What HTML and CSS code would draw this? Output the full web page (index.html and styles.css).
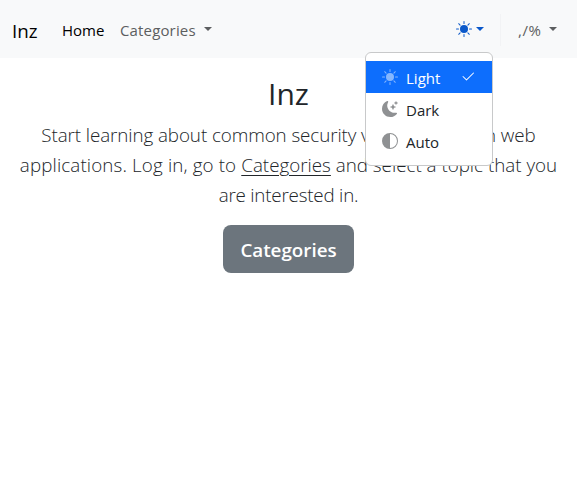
FILE: index.html
```html
<!DOCTYPE html>
<html lang="en">
<head>
<meta charset="utf-8">
<title>Inz</title>
<link rel="stylesheet" href="styles.css">
</head>
<body>
<svg class="sprite">
  <symbol id="sun" viewBox="0 0 16 16"><path d="M8 12a4 4 0 1 0 0-8 4 4 0 0 0 0 8z"/><path d="M8 0a.5.5 0 0 1 .5.5v2a.5.5 0 0 1-1 0v-2A.5.5 0 0 1 8 0zm0 13a.5.5 0 0 1 .5.5v2a.5.5 0 0 1-1 0v-2A.5.5 0 0 1 8 13zm8-5a.5.5 0 0 1-.5.5h-2a.5.5 0 0 1 0-1h2a.5.5 0 0 1 .5.5zM3 8a.5.5 0 0 1-.5.5h-2a.5.5 0 0 1 0-1h2A.5.5 0 0 1 3 8zm10.657-5.657a.5.5 0 0 1 0 .707l-1.414 1.415a.5.5 0 1 1-.707-.708l1.414-1.414a.5.5 0 0 1 .707 0zm-9.193 9.193a.5.5 0 0 1 0 .707L3.05 13.657a.5.5 0 0 1-.707-.707l1.414-1.414a.5.5 0 0 1 .707 0zm9.193 2.121a.5.5 0 0 1-.707 0l-1.414-1.414a.5.5 0 0 1 .707-.707l1.414 1.414a.5.5 0 0 1 0 .707zM4.464 4.465a.5.5 0 0 1-.707 0L2.343 3.05a.5.5 0 1 1 .707-.707l1.414 1.414a.5.5 0 0 1 0 .708z"/></symbol>
  <symbol id="moon" viewBox="0 0 16 16"><path d="M6 .278a.768.768 0 0 1 .08.858 7.208 7.208 0 0 0-.878 3.46c0 4.021 3.278 7.277 7.318 7.277.527 0 1.04-.055 1.533-.16a.787.787 0 0 1 .81.316.733.733 0 0 1-.031.893A8.349 8.349 0 0 1 8.344 16C3.734 16 0 12.286 0 7.71 0 4.266 2.114 1.312 5.124.06A.752.752 0 0 1 6 .278z"/><path d="M10.794 3.148a.217.217 0 0 1 .412 0l.387 1.162c.173.518.579.924 1.097 1.097l1.162.387a.217.217 0 0 1 0 .412l-1.162.387a1.734 1.734 0 0 0-1.097 1.097l-.387 1.162a.217.217 0 0 1-.412 0l-.387-1.162A1.734 1.734 0 0 0 9.31 6.593l-1.162-.387a.217.217 0 0 1 0-.412l1.162-.387a1.734 1.734 0 0 0 1.097-1.097l.387-1.162zM13.863.099a.145.145 0 0 1 .274 0l.258.774c.115.346.386.617.732.732l.774.258a.145.145 0 0 1 0 .274l-.774.258a1.156 1.156 0 0 0-.732.732l-.258.774a.145.145 0 0 1-.274 0l-.258-.774a1.156 1.156 0 0 0-.732-.732l-.774-.258a.145.145 0 0 1 0-.274l.774-.258c.346-.115.617-.386.732-.732L13.863.1z"/></symbol>
  <symbol id="half" viewBox="0 0 16 16"><path d="M8 15A7 7 0 1 0 8 1v14zm0 1A8 8 0 1 1 8 0a8 8 0 0 1 0 16z"/></symbol>
  <symbol id="check" viewBox="0 0 16 16"><path d="M13.854 3.646a.5.5 0 0 1 0 .708l-7 7a.5.5 0 0 1-.708 0l-3.5-3.5a.5.5 0 1 1 .708-.708L6.5 10.293l6.646-6.647a.5.5 0 0 1 .708 0z"/></symbol>
</svg>
<nav class="navbar">
  <a class="brand">Inz</a>
  <a class="link active">Home</a>
  <a class="link categories">Categories<i class="caret"></i></a>
  <div class="theme">
    <svg class="icon"><use href="#sun"/></svg><i class="caret"></i>
    <div class="menu">
      <a class="item selected"><svg class="icon"><use href="#sun"/></svg><span>Light</span><svg class="icon check"><use href="#check"/></svg></a>
      <a class="item"><svg class="icon"><use href="#moon"/></svg><span>Dark</span></a>
      <a class="item"><svg class="icon"><use href="#half"/></svg><span>Auto</span></a>
    </div>
  </div>
  <div class="rule"></div>
  <a class="link language">,/%<i class="caret"></i></a>
</nav>
<main class="hero">
  <h1>Inz</h1>
  <p class="lead"><span class="l1">Start learning about common security vulnerabilities in web</span><br><span class="l2">applications. Log in, go to </span><a>Categories</a> and select a topic that you<br><span class="l3">are interested in.</span></p>
  <a class="button">Categories</a>
</main>
</body>
</html>
```
FILE: styles.css
```css
* { box-sizing: border-box; }
body {
  margin: 0;
  background: #fff;
  color: #212529;
  font: 15px/24px "Open Sans", "Noto Sans", sans-serif;
}
.sprite { display: none; }
.navbar {
  display: flex;
  align-items: center;
  height: 58px;
  padding: 2px 20px 0 12px;
  background: #f8f9fa;
}
.brand { width: 50px; padding-top: 1px; color: #000; font-size: 18.8px; }
.link { color: #5c5e60; white-space: nowrap; }
.active { width: 58px; color: #000; }
.categories { letter-spacing: .15px; }
.icon { width: 16px; height: 16px; fill: currentColor; flex: none; }
.caret {
  display: inline-block;
  margin-left: 8px;
  vertical-align: 5px;
  border: 4.8px solid transparent;
  border-top-color: currentColor;
  border-bottom: 0;
}
.theme {
  position: relative;
  display: flex;
  align-items: center;
  width: 28px;
  height: 24px;
  margin-left: auto;
  color: #0a58ca;
}
.theme > .icon { margin-top: -2px; }
.theme > .caret { margin: -2px 0 0 4px; }
.rule { width: 1px; height: 32px; margin: 0 17px 0 16px; background: #f2f3f5; }
.language { letter-spacing: .6px; }
.language .caret { margin-left: 7.4px; }
.menu {
  position: absolute;
  right: -9px;
  top: 34px;
  width: 128px;
  height: 114px;
  padding: 8px 0;
  border: 1px solid #c8c9ca;
  border-radius: 6px;
  background: #fff;
  z-index: 1;
}
.item {
  display: flex;
  align-items: center;
  height: 32px;
  padding: 0 16px;
  color: #212529;
}
.item span { margin: 2px 0 0 8px; line-height: 23px; }
.item .icon { opacity: .5; }
.item .check { margin-left: auto; opacity: 1; }
.selected { background: #0d6efd; color: #fff; }
.hero { text-align: center; }
h1 { margin: 17px 0 7px; font-size: 30px; font-weight: 400; line-height: 38px; }
.lead { margin: 0 0 15px; font-size: 18.8px; font-weight: 300; line-height: 30px; white-space: nowrap; }
.l1 { letter-spacing: -.08px; }
.l2 { letter-spacing: .13px; }
.l3 { letter-spacing: -.2px; }
.lead a { text-decoration: underline; text-underline-offset: 3px; text-decoration-thickness: 1px; }
.button {
  display: inline-flex;
  align-items: center;
  justify-content: center;
  width: 131px;
  height: 48px;
  padding-top: 2px;
  border-radius: 8px;
  background: #6c757d;
  color: #fff;
  font-size: 18.8px;
  font-weight: 600;
}
```
